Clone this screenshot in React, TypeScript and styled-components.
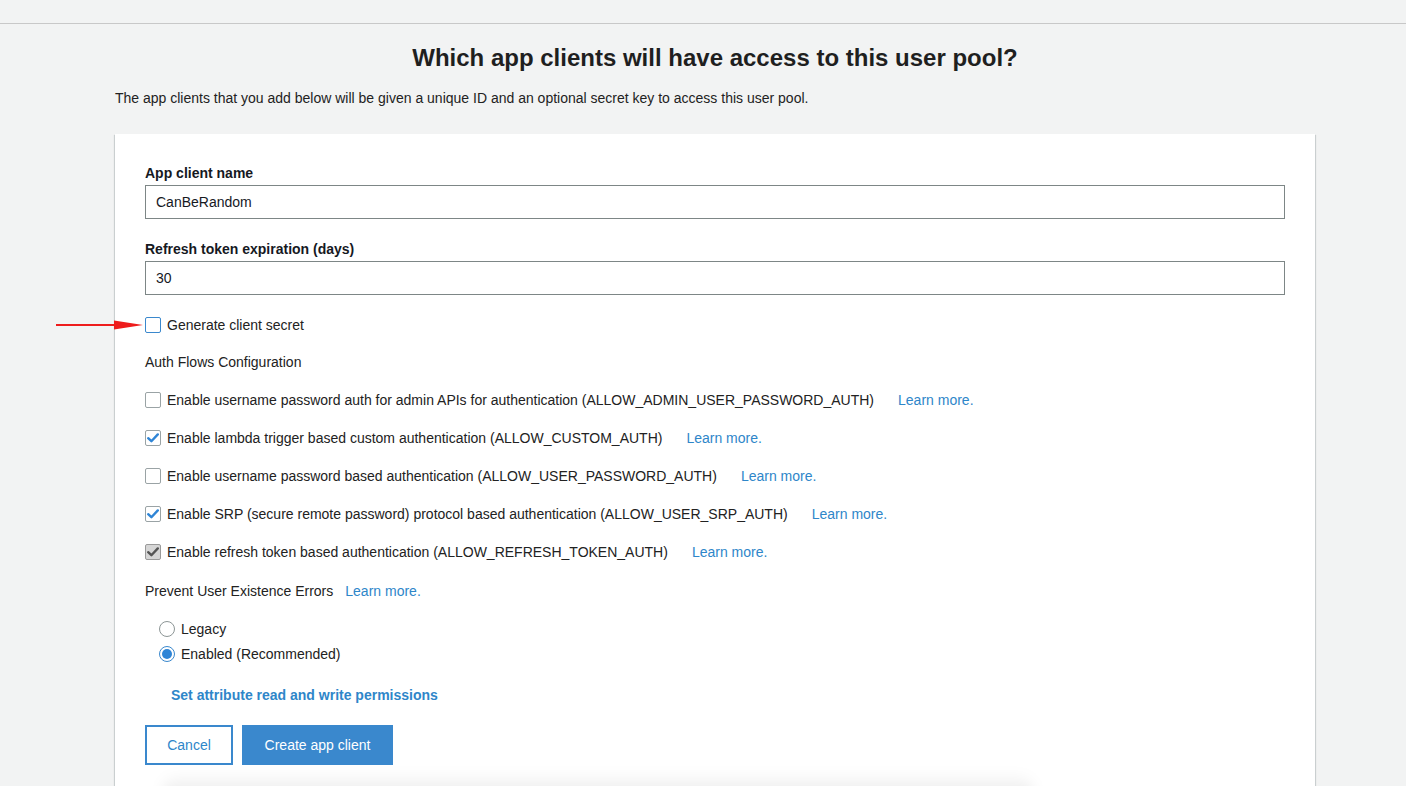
import React from "react";
import styled, { createGlobalStyle } from "styled-components";

const GlobalStyle = createGlobalStyle`
  html, body { margin: 0; padding: 0; background: #f2f3f3; }
  body {
    font-family: "Liberation Sans", Arial, Helvetica, sans-serif;
    font-size: 14px;
    color: #222;
    overflow: hidden;
  }
  * { box-sizing: border-box; }
`;

const TopBar = styled.div`
  height: 24px;
  background: #f2f3f3;
  border-bottom: 1px solid #c8c8c8;
`;

const Main = styled.main`
  padding: 0 91px 0 115px;
  display: flex;
  flex-direction: column;
`;

const Title = styled.h1`
  margin: 20px 0 0;
  font-size: 24px;
  line-height: 28px;
  font-weight: 700;
  text-align: center;
  color: #1f1f1f;
`;

const Subtitle = styled.p`
  margin: 16px 0 0;
  font-size: 14px;
  line-height: 20px;
  color: #222;
`;

const Card = styled.section`
  position: relative;
  margin-top: 26px;
  width: 1200px;
  background: #fff;
  padding: 29px 30px 0 30px;
  box-shadow: 0 1px 1px 0 rgba(0, 28, 36, 0.25), 1px 1px 1px 0 rgba(0, 28, 36, 0.12),
    -1px 1px 1px 0 rgba(0, 28, 36, 0.12);
  display: flex;
  flex-direction: column;
  min-height: 660px;
`;

const Label = styled.label<{ $mt?: number }>`
  display: block;
  margin-top: ${(p) => p.$mt ?? 0}px;
  font-weight: 700;
  font-size: 14px;
  line-height: 20px;
  color: #16191f;
`;

const TextInput = styled.input`
  display: block;
  margin-top: 2px;
  width: 1140px;
  height: 34px;
  border: 1px solid #7d8686;
  border-radius: 0;
  padding: 0 10px;
  font-family: inherit;
  font-size: 14px;
  color: #16191f;
  background: #fff;
  outline: none;
`;

const Row = styled.div<{ $mt?: number }>`
  position: relative;
  display: flex;
  align-items: center;
  height: 20px;
  margin-top: ${(p) => p.$mt ?? 0}px;
  line-height: 20px;
`;

const Box = styled.span<{ $checked?: boolean; $disabled?: boolean; $focus?: boolean }>`
  flex: none;
  width: 16px;
  height: 16px;
  border-radius: 2px;
  border: 1px solid ${(p) => (p.$focus ? "#3a88cd" : p.$disabled ? "#9a9a9a" : "#9aa3a5")};
  background: ${(p) => (p.$disabled ? "#d6d6d6" : "#fff")};
  display: flex;
  align-items: center;
  justify-content: center;
  margin-right: 6px;
`;

const RowText = styled.span`
  color: #222;
  white-space: nowrap;
`;

const Link = styled.a<{ $ml?: number }>`
  color: #2e86c9;
  text-decoration: none;
  margin-left: ${(p) => p.$ml ?? 24}px;
  white-space: nowrap;
  cursor: pointer;
`;

const RadioGroup = styled.div`
  margin-top: 18px;
  padding-left: 14px;
  display: flex;
  flex-direction: column;
  gap: 5px;
`;

const RadioCircle = styled.span<{ $on?: boolean }>`
  flex: none;
  width: 16px;
  height: 16px;
  border-radius: 50%;
  border: 1px solid ${(p) => (p.$on ? "#3a88cd" : "#8d9696")};
  background: #fff;
  display: flex;
  align-items: center;
  justify-content: center;
  margin-right: 6px;
  &::after {
    content: "";
    display: ${(p) => (p.$on ? "block" : "none")};
    width: 10px;
    height: 10px;
    border-radius: 50%;
    background: #2f85d6;
  }
`;

const PermLink = styled.a`
  margin-top: 21px;
  padding-left: 26px;
  font-weight: 700;
  color: #2e86c9;
  line-height: 20px;
  text-decoration: none;
  cursor: pointer;
`;

const Buttons = styled.div`
  display: flex;
  gap: 9px;
  margin-top: 20px;
`;

const Button = styled.button<{ $primary?: boolean }>`
  height: 40px;
  padding: 0;
  font-family: inherit;
  font-size: 14px;
  white-space: nowrap;
  border-radius: 0;
  cursor: pointer;
  color: ${(p) => (p.$primary ? "#fff" : "#2e86c9")};
  background: ${(p) => (p.$primary ? "#3a88cd" : "#fff")};
  border: 2px solid #3a88cd;
  width: ${(p) => (p.$primary ? 151 : 88)}px;
`;

const FadeShadow = styled.div`
  margin-top: 8px;
  margin-left: 18px;
  width: 870px;
  height: 40px;
  background: linear-gradient(to bottom, rgba(0, 0, 0, 0) 0%, rgba(0, 0, 0, 0.06) 35%, rgba(0, 0, 0, 0.1) 100%);
  border-radius: 30px;
  filter: blur(7px);
`;

const Arrow = styled.svg`
  position: absolute;
  left: -89px;
  top: 4px;
  width: 87px;
  height: 12px;
  overflow: visible;
`;

const Check = ({ color }: { color: string }) => (
  <svg width="12" height="10" viewBox="0 0 12 10">
    <path d="M1.2 5.2 L4.4 8.2 L10.8 1.4" fill="none" stroke={color} strokeWidth="2.4" strokeLinecap="round" strokeLinejoin="round" />
  </svg>
);

type Flow = { text: string; checked?: boolean; disabled?: boolean };

const flows: Flow[] = [
  { text: "Enable username password auth for admin APIs for authentication (ALLOW_ADMIN_USER_PASSWORD_AUTH)" },
  { text: "Enable lambda trigger based custom authentication (ALLOW_CUSTOM_AUTH)", checked: true },
  { text: "Enable username password based authentication (ALLOW_USER_PASSWORD_AUTH)" },
  { text: "Enable SRP (secure remote password) protocol based authentication (ALLOW_USER_SRP_AUTH)", checked: true },
  { text: "Enable refresh token based authentication (ALLOW_REFRESH_TOKEN_AUTH)", checked: true, disabled: true },
];

export default function App() {
  return (
    <>
      <GlobalStyle />
      <TopBar />
      <Main>
        <Title>Which app clients will have access to this user pool?</Title>
        <Subtitle>
          The app clients that you add below will be given a unique ID and an optional secret key to access this user pool.
        </Subtitle>
        <Card>
          <Label>App client name</Label>
          <TextInput defaultValue="CanBeRandom" />
          <Label $mt={20}>Refresh token expiration (days)</Label>
          <TextInput defaultValue="30" />

          <Row $mt={20}>
            <Arrow viewBox="0 0 87 12">
              <line x1="0" y1="6" x2="62" y2="6" stroke="#ee1c1c" strokeWidth="2.2" />
              <polygon points="58,1.5 87,6 58,10.5" fill="#ee1c1c" />
            </Arrow>
            <Box $focus />
            <RowText>Generate client secret</RowText>
          </Row>

          <Row $mt={17}>
            <RowText>Auth Flows Configuration</RowText>
          </Row>

          {flows.map((f, i) => (
            <Row key={i} $mt={18}>
              <Box $checked={f.checked} $disabled={f.disabled}>
                {f.checked && <Check color={f.disabled ? "#555" : "#2f85d6"} />}
              </Box>
              <RowText>{f.text}</RowText>
              <Link>Learn more.</Link>
            </Row>
          ))}

          <Row $mt={19}>
            <RowText>Prevent User Existence Errors</RowText>
            <Link $ml={12}>Learn more.</Link>
          </Row>

          <RadioGroup>
            <Row>
              <RadioCircle />
              <RowText>Legacy</RowText>
            </Row>
            <Row>
              <RadioCircle $on />
              <RowText>Enabled (Recommended)</RowText>
            </Row>
          </RadioGroup>

          <PermLink>Set attribute read and write permissions</PermLink>

          <Buttons>
            <Button>Cancel</Button>
            <Button $primary>Create app client</Button>
          </Buttons>
          <FadeShadow />
        </Card>
      </Main>
    </>
  );
}
